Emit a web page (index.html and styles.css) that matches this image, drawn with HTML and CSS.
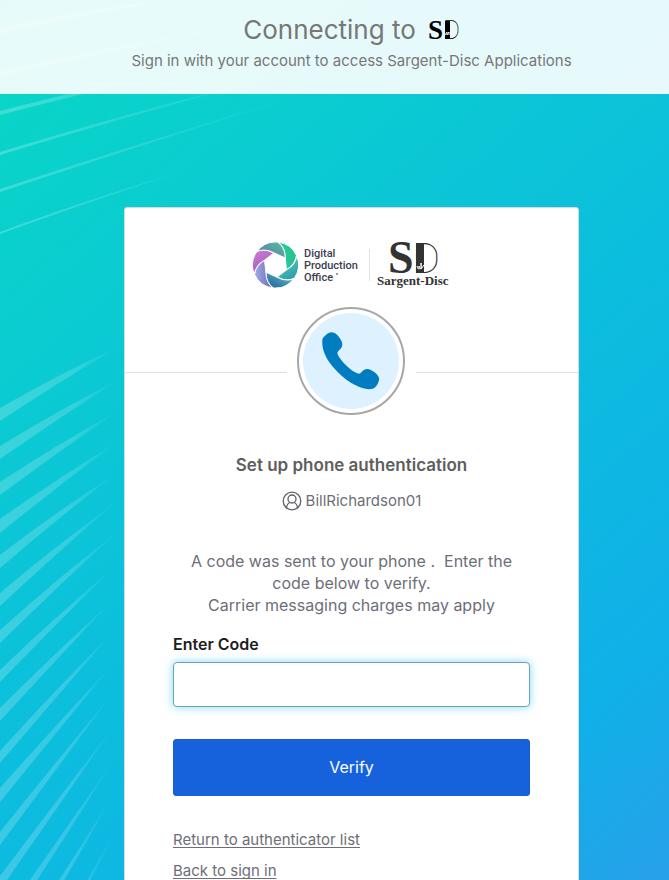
FILE: index.html
```html
<!DOCTYPE html>
<html lang="en">
<head>
	<meta charset="UTF-8">
	<meta name="viewport" content="width=device-width, initial-scale=1">
	<title>Sargent-Disc - Sign In</title>
	<link rel="stylesheet" href="styles.css">
</head>
<body>
	<!-- background rays -->
	<svg class="rays" width="360" height="900" viewBox="0 0 360 900" aria-hidden="true">
		<defs>
			<linearGradient id="fade" gradientUnits="userSpaceOnUse" x1="0" y1="0" x2="118" y2="0">
				<stop offset="0" stop-color="#fff" stop-opacity=".2"/>
				<stop offset=".6" stop-color="#fff" stop-opacity=".17"/>
				<stop offset="1" stop-color="#fff" stop-opacity=".02"/>
			</linearGradient>
			<linearGradient id="fadeLong" gradientUnits="userSpaceOnUse" x1="0" y1="0" x2="330" y2="0">
				<stop offset="0" stop-color="#fff" stop-opacity=".22"/>
				<stop offset="1" stop-color="#fff" stop-opacity="0"/>
			</linearGradient>
		</defs>
		<g fill="url(#fadeLong)">
			<path d="M0 28Q90 8 190-4L190-2Q90 12 0 34Z"/>
			<path d="M0 71Q160 36 350 4L350 6Q160 40 0 76Z"/>
			<path d="M0 111Q150 72 340 36Q150 76 0 115Z"/>
			<path d="M0 152Q140 109 300 70Q140 112 0 155Z"/>
			<path d="M0 189Q140 143 300 95Q140 146 0 192Z"/>
			<path d="M0 232Q80 202 180 172Q80 205 0 234Z"/>
		</g>
		<g fill="url(#fade)">
			<path d="M0 408Q59 374 118 347Q59 382 0 421Z"/>
			<path d="M0 446Q59 410 118 380Q59 418 0 459Z"/>
			<path d="M0 482Q58 444 116 412Q58 452 0 495Z"/>
			<path d="M0 519Q58 478 116 443Q58 486 0 533Z"/>
			<path d="M0 555Q57 511 114 475Q57 519 0 568Z"/>
			<path d="M0 593Q58 544 115 503Q58 552 0 606Z"/>
			<path d="M0 630Q58 578 117 532Q58 586 0 643Z"/>
			<path d="M0 670Q55 617 110 571Q55 625 0 682Z"/>
			<path d="M0 708Q55 653 110 603Q55 661 0 721Z"/>
			<path d="M0 751Q57 688 114 631Q57 696 0 763Z"/>
			<path d="M0 788Q56 725 112 665Q56 733 0 802Z"/>
			<path d="M0 832Q55 763 110 697Q55 771 0 845Z"/>
			<path d="M0 876Q57 800 114 726Q57 808 0 890Z"/>
			<path d="M12 906Q64 831 113 761Q65 838 20 906Z"/>
			<path d="M42 906Q76 855 109 801Q78 859 48 906Z"/>
			<path d="M72 906Q92 872 111 838Q94 876 76 906Z"/>
		</g>
	</svg>

	<div class="page">
		<header class="app-header">
			<h1>Connecting to
				<svg class="app-logo" width="34" height="22" viewBox="0 0 34 22" role="img" aria-label="SD">
					<text class="mono-s" x="2" y="20" font-size="27">S</text>
					<text class="mono-d" x="17" y="20" font-size="26">D</text>
					<rect x="19" y="2" width="5" height="18"/>
					<path d="M19 16l2-3v3l2-3v3" fill="none" stroke="#e6f9fa"/>
				</svg>
			</h1>
			<p>Sign in with your account to access Sargent-Disc Applications</p>
		</header>

		<main class="sign-in">
			<div class="card-header">
				<!-- company logo -->
				<svg class="org-logo" width="201" height="50" viewBox="0 0 201 50" role="img" aria-label="Digital Production Office, Sargent-Disc">
					<defs>
						<linearGradient id="b1"><stop stop-color="#25d29a"/><stop offset="1" stop-color="#28bd91"/></linearGradient>
						<linearGradient id="b2"><stop stop-color="#55c3b8"/><stop offset="1" stop-color="#299aac"/></linearGradient>
						<linearGradient id="b3"><stop stop-color="#57b5c5"/><stop offset="1" stop-color="#286b9b"/></linearGradient>
						<linearGradient id="b4"><stop stop-color="#7561bd"/><stop offset="1" stop-color="#9daee4"/></linearGradient>
						<linearGradient id="b5"><stop stop-color="#a35fc0"/><stop offset="1" stop-color="#cd7bd0"/></linearGradient>
						<linearGradient id="b6"><stop stop-color="#637fa8"/><stop offset="1" stop-color="#51b9a2"/></linearGradient>
						<path id="blade" d="M9.7-7.1Q9.5-18 2.4-22.9A23 23 0 0 1 21-9.400Q20.3-.8 11 4.9Z"/>
					</defs>
					<g transform="translate(24.5 25)" stroke="#fff" stroke-width="1" stroke-linejoin="round">
						<use href="#blade" fill="url(#b1)"/>
						<use href="#blade" fill="url(#b2)" transform="rotate(60)"/>
						<use href="#blade" fill="url(#b3)" transform="rotate(120)"/>
						<use href="#blade" fill="url(#b4)" transform="rotate(180)"/>
						<use href="#blade" fill="url(#b5)" transform="rotate(240)"/>
						<use href="#blade" fill="url(#b6)" transform="rotate(300)"/>
					</g>
					<g class="dpo">
						<text x="53" y="17">Digital</text>
						<text x="53" y="29">Production</text>
						<text x="53" y="41">Office</text>
					</g>
					<circle cx="86" cy="34" r="1" fill="#77778a"/>
					<rect x="118" y="9" width="1" height="32" fill="#e1e1e6"/>
					<g fill="#333">
						<text class="mono-s" x="137" y="33" font-size="46">S</text>
						<text class="mono-d" x="161" y="33" font-size="43">D</text>
						<rect x="165" y="3" width="8" height="30"/>
						<path d="M166 26c1 4 2 4 2 0c0 5 3 4 2-3v6l3-4" fill="none" stroke="#fff"/>
						<text class="sd-name" x="126" y="45">Sargent-Disc</text>
					</g>
				</svg>
			</div>

			<div class="beacon">
				<svg width="108" height="108" viewBox="0 0 324 324" aria-hidden="true">
					<circle cx="162" cy="162" r="159" fill="#fff" stroke="#a7a7a7" stroke-width="6"/>
					<circle cx="162" cy="162" r="144" fill="#def1ff"/>
					<path fill="#007dc1" d="M76 98C76 91 91 79 96 77C105 73 114 77 120 83C128 91 136 104 136 110C136 118 133 124 127 129C121 134 120 138 123 144C132 163 160 190 179 198C185 201 189 201 193 196C199 189 204 186 212 186C222 186 244 202 246 213C248 223 238 242 228 245C216 248 202 246 189 241C149 226 117 193 97 166C83 144 74 123 76 98Z"/>
				</svg>
			</div>

			<form class="card-body" onsubmit="return false">
				<h2>Set up phone authentication</h2>
				<div class="user">
					<svg width="20" height="20" viewBox="0 0 20 20" fill="none" stroke="#5f5f66" stroke-width="1.3" aria-hidden="true">
						<circle cx="10" cy="10" r="8.8"/>
						<circle cx="10" cy="8" r="4"/>
						<path d="M4.500 16.500C5 13.500 6.500 12 8 11.500M12 11.500C13.500 12 15 13.500 15.500 16.500"/>
					</svg>
					<span>BillRichardson01</span>
				</div>
				<p class="info">A code was sent to your phone .&nbsp; Enter the code below to verify.<br>Carrier messaging charges may apply</p>
				<label for="code">Enter Code</label>
				<input type="text" id="code" name="code" autocomplete="off">
				<button type="submit">Verify</button>
				<a href="#">Return to authenticator list</a>
				<a href="#">Back to sign in</a>
			</form>
		</main>
	</div>
</body>
</html>
```
FILE: styles.css
```css
*{box-sizing:border-box;}
body{margin:0;font-family:Inter,"Liberation Sans",sans-serif;color:#6e6e78;background:linear-gradient(140deg,#08d8c4 0%,#0bcbd2 28%,#0cbedd 54%,#10b0e8 84%,#28a0ea 100%);}
h1,h2,p{margin:0;font-weight:400;}
.rays{position:absolute;top:0;left:0;}
.page{position:relative;height:100vh;overflow:hidden;}

/* top banner */
.app-header{height:94px;padding:14px 0 0 34px;text-align:center;color:#777;background:rgba(255,255,255,.9);}
.app-header h1{display:flex;justify-content:center;align-items:center;gap:10px;font-size:26px;line-height:32px;}
.app-header p{margin-top:5px;font-size:15px;line-height:20px;}
.app-logo,.org-logo{overflow:visible;}
.mono-s{font-family:"Liberation Serif",serif;font-weight:700;}
.mono-d{font-family:Roboto,sans-serif;font-weight:100;}

/* sign in card */
.sign-in{width:calc(100% - 34px);max-width:455px;margin:113px auto 0;background:#fff;border:1px solid #d8d8d8;border-radius:3px;position:relative;left:17px;}
.card-header{height:165px;padding-top:32px;border-bottom:1px solid #ddd;text-align:center;}
.org-logo{display:block;margin:0 auto;}
.dpo{font-family:Roboto,sans-serif;font-size:11px;font-weight:500;fill:#3d3d50;}
.sd-name{font-family:"Liberation Serif",serif;font-size:13px;font-weight:700;}
.beacon{position:relative;width:129px;height:108px;margin:-66px auto 0;background:#fff;}
.beacon svg{display:block;margin:0 10px;}

.card-body{display:flex;flex-direction:column;align-items:flex-start;padding:38px 48px 40px;}
.card-body h2{width:100%;font-size:17px;line-height:24px;font-weight:600;text-align:center;color:#5e5e5e;}
.user{display:flex;align-items:center;justify-content:center;gap:4px;width:100%;margin-top:14px;font-size:15px;line-height:20px;}
.info{width:100%;margin-top:39px;font-size:16px;line-height:22px;text-align:center;}
label{margin-top:18px;font-size:16px;line-height:20px;font-weight:600;color:#1d1d21;}
input{width:100%;height:45px;margin-top:8px;padding:0 10px;font:inherit;font-size:16px;border:1px solid #6ba3bb;border-radius:4px;outline:none;box-shadow:0 0 8px rgba(0,180,230,.5);}
button{width:100%;height:57px;margin:32px 0 23px;padding:0 0 2px;font:inherit;font-size:16px;color:#fff;background:#1662dd;border:1px solid #1a5fd0;border-radius:3px;}
a{margin-top:11px;font-size:15px;line-height:20px;color:#6e6e78;text-decoration:underline;text-underline-offset:2px;text-decoration-skip-ink:none;}
```
